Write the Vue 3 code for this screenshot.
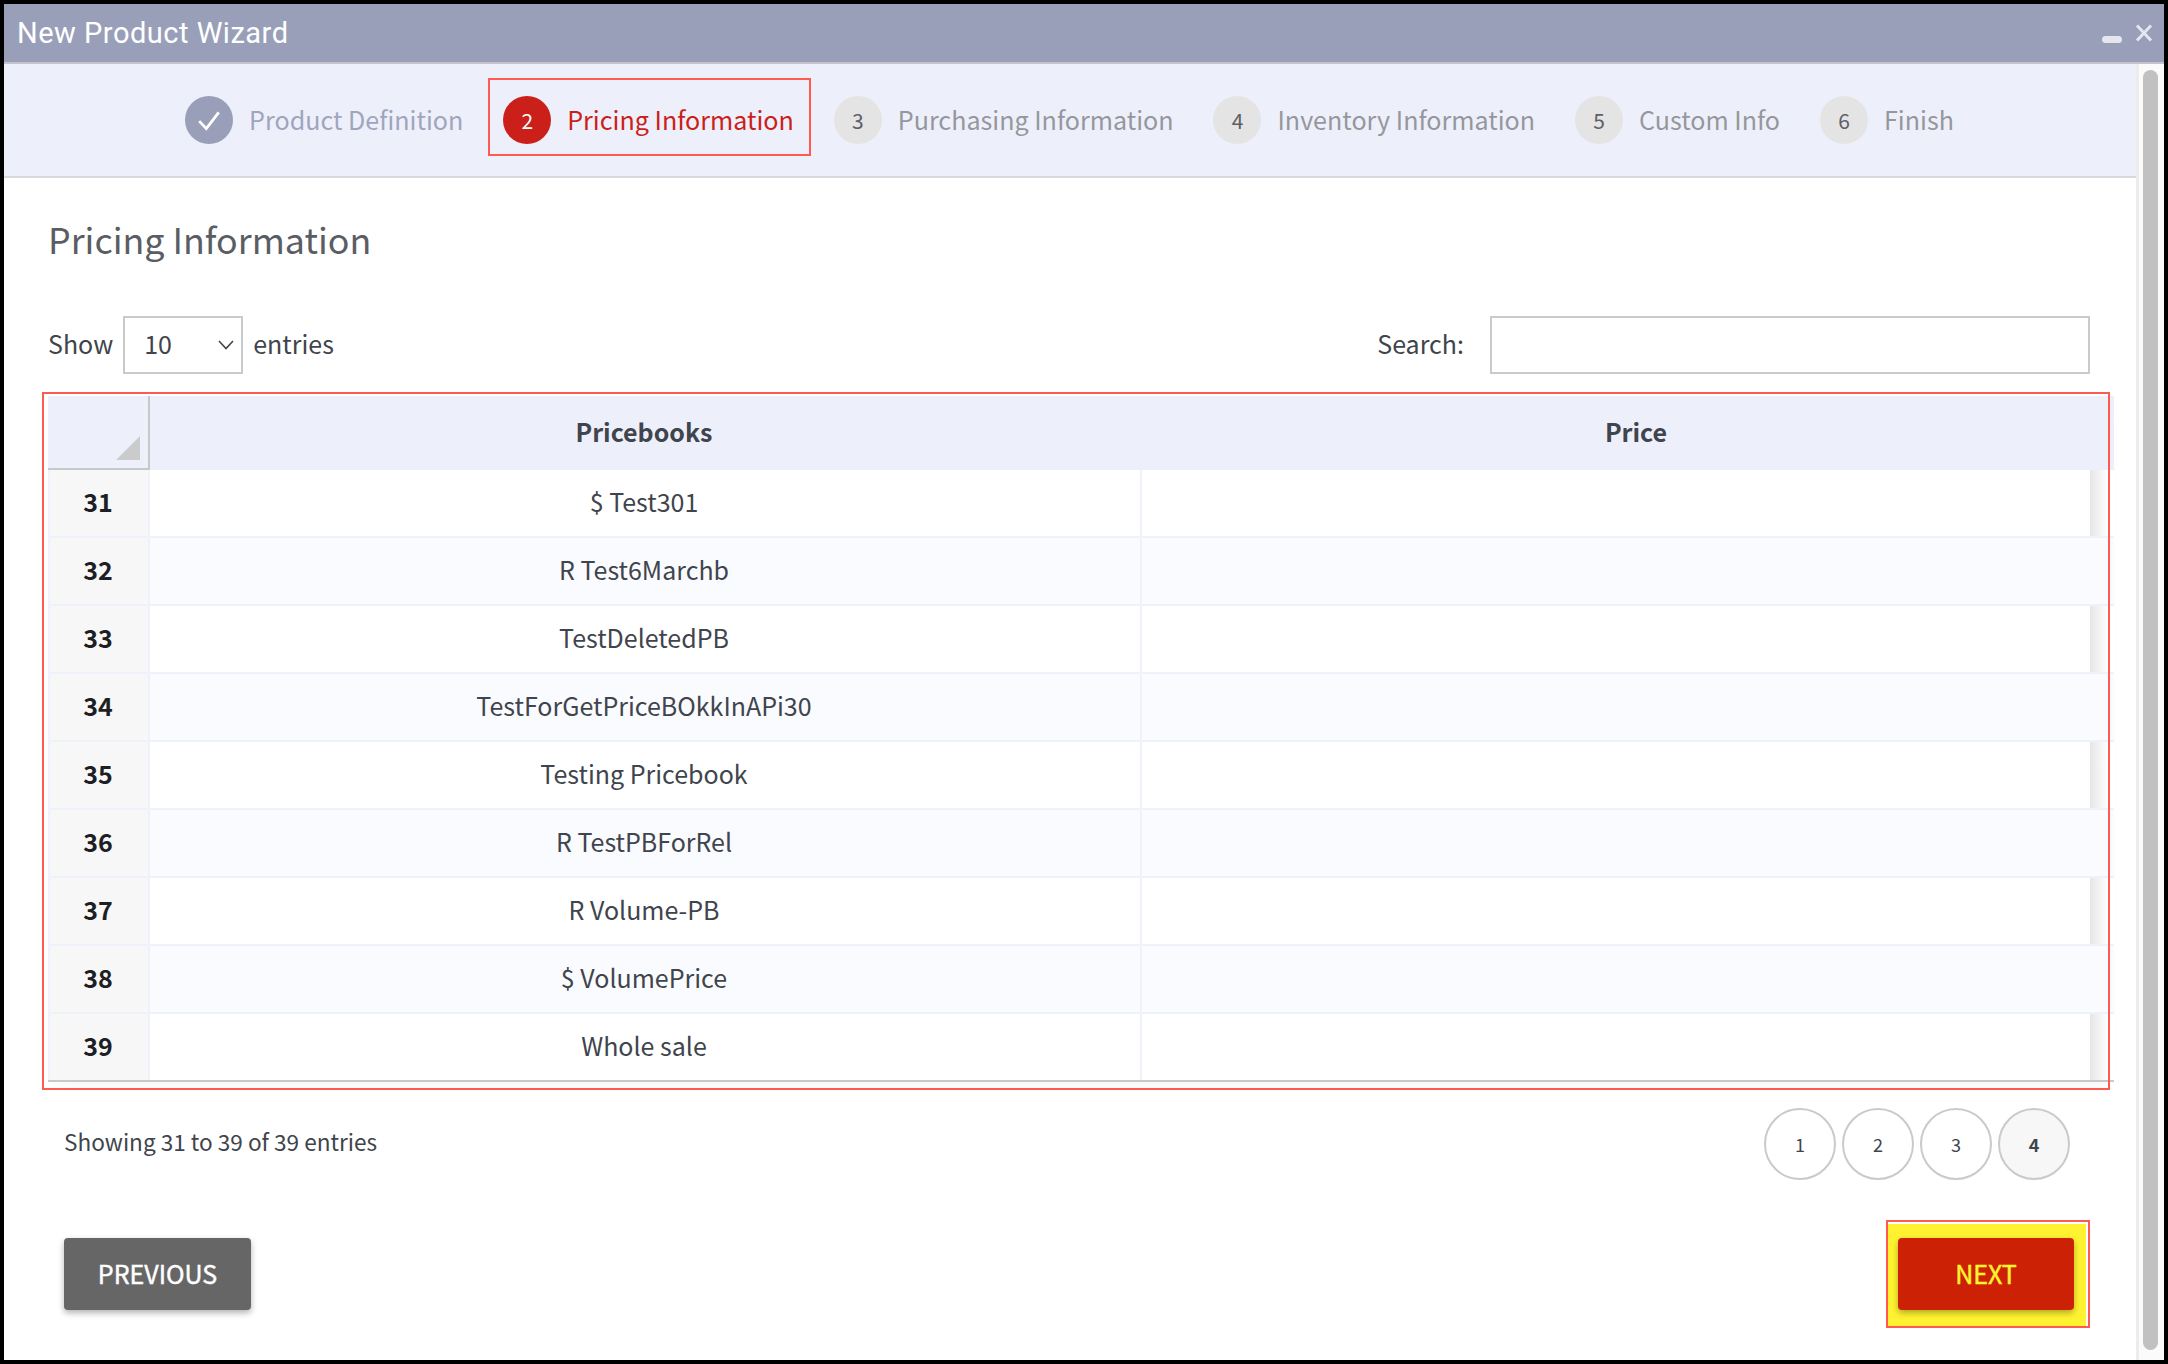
<template>
  <div class="window">
    <header class="titlebar">
      <span class="title">New Product Wizard</span>
      <div class="win-actions">
        <span class="minimize"></span>
        <svg class="close" viewBox="0 0 18 18" width="18" height="18">
          <path d="M2 1.5 L16 16.5 M16 1.5 L2 16.5" stroke="#ffffff" stroke-opacity="0.75" stroke-width="3" fill="none" />
        </svg>
      </div>
    </header>

    <div class="body">
      <main class="main">
        <nav class="steps">
          <div
            v-for="step in steps"
            :key="step.num"
            class="step"
            :class="step.state"
          >
            <span class="bubble">
              <svg v-if="step.state === 'done'" viewBox="0 0 24 24" width="26" height="26">
                <path d="M3 13 L9.5 20 L21 5" stroke="#ffffff" stroke-width="2.6" fill="none" />
              </svg>
              <template v-else>{{ step.num }}</template>
            </span>
            <span class="step-label">{{ step.label }}</span>
          </div>
        </nav>

        <section class="content">
          <h1 class="heading">Pricing Information</h1>

          <div class="toolbar">
            <div class="length">
              <span class="lift">Show</span>
              <div class="select">
                <span class="lift">10</span>
                <svg viewBox="0 0 18 12" width="18" height="12">
                  <path d="M2 2 L9 9.5 L16 2" stroke="#40444c" stroke-width="1.6" fill="none" />
                </svg>
              </div>
              <span class="lift">entries</span>
            </div>
            <div class="search">
              <span class="lift">Search:</span>
              <div class="search-input"></div>
            </div>
          </div>

          <div class="table-wrap">
            <div class="row head">
              <div class="cell corner"><span class="sort"></span></div>
              <div class="cell name">Pricebooks</div>
              <div class="cell head-price">Price</div>
            </div>
            <div
              v-for="(row, i) in rows"
              :key="row.id"
              class="row"
              :class="i % 2 ? 'even' : 'odd'"
            >
              <div class="cell num">{{ row.id }}</div>
              <div class="cell name">{{ row.name }}</div>
              <div class="cell price"></div>
            </div>
          </div>

          <div class="table-foot">
            <span class="info">Showing 31 to 39 of 39 entries</span>
            <div class="pager">
              <span
                v-for="p in 4"
                :key="p"
                class="page"
                :class="{ current: p === 4 }"
              >{{ p }}</span>
            </div>
          </div>

          <div class="actions">
            <button class="btn prev">PREVIOUS</button>
            <div class="next-mark">
              <button class="btn next">NEXT</button>
            </div>
          </div>
        </section>
      </main>

      <aside class="scrollbar"><span class="thumb"></span></aside>
    </div>
  </div>
</template>

<script setup>
const steps = [
  { num: 1, label: 'Product Definition', state: 'done' },
  { num: 2, label: 'Pricing Information', state: 'active' },
  { num: 3, label: 'Purchasing Information', state: 'todo' },
  { num: 4, label: 'Inventory Information', state: 'todo' },
  { num: 5, label: 'Custom Info', state: 'todo' },
  { num: 6, label: 'Finish', state: 'todo' }
]

const rows = [
  { id: 31, name: '$ Test301' },
  { id: 32, name: 'R Test6Marchb' },
  { id: 33, name: 'TestDeletedPB' },
  { id: 34, name: 'TestForGetPriceBOkkInAPi30' },
  { id: 35, name: 'Testing Pricebook' },
  { id: 36, name: 'R TestPBForRel' },
  { id: 37, name: 'R Volume-PB' },
  { id: 38, name: '$ VolumePrice' },
  { id: 39, name: 'Whole sale' }
]
</script>

<style>
html, body {
  margin: 0;
  background: #000;
}
</style>

<style scoped>
.window {
  width: 2168px;
  height: 1364px;
  box-sizing: border-box;
  border: 4px solid #000;
  display: flex;
  flex-direction: column;
  background: #fff;
  overflow: hidden;
  font-family: "Noto Sans CJK SC", "Noto Sans", sans-serif;
  color: #40444c;
}

.titlebar {
  height: 60px;
  flex: none;
  box-sizing: border-box;
  border-bottom: 2px solid #c4c5cc;
  background: #999fb9;
  display: flex;
  align-items: center;
  justify-content: space-between;
  padding: 0 11px 0 13px;
}

.title {
  font-family: Roboto, "Liberation Sans", sans-serif;
  font-size: 29px;
  letter-spacing: 0.5px;
  color: #fff;
}

.win-actions {
  display: flex;
  align-items: center;
  gap: 13px;
}

.minimize {
  width: 20px;
  height: 7px;
  margin-top: 12px;
  border-radius: 4px;
  background: rgba(255, 255, 255, 0.75);
}

.body {
  flex: 1;
  min-height: 0;
  display: flex;
}

.main {
  flex: 1;
  min-width: 0;
}

.scrollbar {
  width: 28px;
  flex: none;
  box-sizing: border-box;
  border-left: 3px solid #ececec;
  padding: 6px 6px 10px 4px;
  display: flex;
  background: #fbfbfb;
}

.thumb {
  width: 16px;
  border-radius: 8px;
  background: #c1c1c1;
}

.steps {
  height: 114px;
  box-sizing: border-box;
  border-bottom: 2px solid #d8d9de;
  background: #edf0fb;
  display: flex;
  align-items: center;
  justify-content: center;
  gap: 39.9px;
  padding-right: 1px;
}

.step {
  display: flex;
  align-items: center;
  gap: 16px;
  font-size: 25.1px;
  color: #96979c;
  position: relative;
}

.step-label {
  margin-top: -2px;
}

.bubble {
  width: 48px;
  height: 48px;
  border-radius: 50%;
  background: #e4e4e4;
  color: #5f6064;
  font-size: 21px;
  display: flex;
  align-items: center;
  justify-content: center;
}

.step.done .bubble {
  background: #999fb9;
}

.step.done {
  color: #a0a5bd;
}

.step.active {
  color: #cb1f1a;
}

.step.active .bubble {
  background: #cb1f1a;
  color: #fff;
}

.step.active::after {
  content: "";
  position: absolute;
  inset: -18px -17px -12px -15px;
  border: 2px solid #ff5a52;
}

.content {
  padding: 0 46px 0 44px;
}

.heading {
  margin: 0;
  padding-top: 31px;
  font-size: 35.8px;
  line-height: 58px;
  font-weight: 400;
  color: #5a5d63;
}

.toolbar {
  margin-top: 49px;
  display: flex;
  align-items: center;
  justify-content: space-between;
  font-size: 25px;
}

.lift {
  position: relative;
  top: -2px;
}

.length {
  display: flex;
  align-items: center;
  gap: 10px;
}

.select {
  width: 120px;
  height: 58px;
  box-sizing: border-box;
  border: 2px solid #cacaca;
  padding: 0 6px 0 19px;
  display: flex;
  align-items: center;
  justify-content: space-between;
}

.search {
  display: flex;
  align-items: center;
  gap: 26px;
}

.search-input {
  width: 600px;
  height: 58px;
  box-sizing: border-box;
  border: 2px solid #cacaca;
}

.table-wrap {
  position: relative;
  width: 2066px;
  margin: 22px 0 0 0;
  box-shadow: 0 8px 14px -8px rgba(0, 0, 0, 0.06);
  font-size: 25px;
}

.table-wrap::after {
  content: "";
  position: absolute;
  top: -4px;
  bottom: -8px;
  left: -6px;
  right: 4px;
  border: 2px solid #ff5a52;
  pointer-events: none;
}

.row {
  display: grid;
  grid-template-columns: 102px 992px 1fr;
  height: 68px;
  box-sizing: border-box;
  border-bottom: 2px solid #eff1fb;
}

.row:last-child {
  border-bottom: 2px solid #c8c8c8;
}

.row.even {
  background: #fafbff;
}

.row.odd .price {
  position: relative;
}

.row.odd .price::after {
  content: "";
  position: absolute;
  top: 0;
  bottom: 0;
  right: 6px;
  width: 18px;
  background: linear-gradient(to right, #e6e6e6, #ffffff);
}

.cell {
  display: flex;
  align-items: center;
  justify-content: center;
  padding-bottom: 4px;
  box-sizing: border-box;
}

.row.head {
  height: 74px;
  background: #edf0fb;
  border-bottom: 0;
  font-weight: 700;
}

.row.head .cell {
  padding-bottom: 5px;
}

.row.head .name {
  padding-right: 4px;
  border-right: 0;
}

.head-price {
  padding-left: 16px;
}

.corner {
  position: relative;
  border-right: 2px solid #c8c8c8;
  border-bottom: 2px solid #c8c8c8;
}

.sort {
  position: absolute;
  right: 8px;
  bottom: 8px;
  width: 24px;
  height: 24px;
  background: #cbcbcb;
  clip-path: polygon(100% 0, 100% 100%, 0 100%);
}

.num {
  padding-right: 2px;
  background: #f7f7f7;
  font-weight: 700;
  color: #1d1f24;
  border-right: 2px solid #eff1fb;
  border-left: 2px solid #eff1fb;
}

.name {
  padding-right: 2px;
  border-right: 2px solid #eff1fb;
}

.table-foot {
  margin-top: 26px;
  padding: 0 20px 0 16px;
  display: flex;
  align-items: center;
  justify-content: space-between;
  font-size: 22.6px;
}

.info {
  margin-top: -6px;
}

.pager {
  display: flex;
  gap: 6px;
}

.page {
  width: 72px;
  height: 72px;
  box-sizing: border-box;
  border: 2px solid #cacaca;
  border-radius: 50%;
  display: flex;
  align-items: center;
  justify-content: center;
  font-size: 18px;
}

.page.current {
  background: #f7f7f7;
  font-weight: 700;
}

.actions {
  margin-top: 40px;
  padding: 0 0 0 16px;
  display: flex;
  align-items: center;
  justify-content: space-between;
}

.btn {
  height: 72px;
  border: 0;
  border-radius: 4px;
  padding: 0 0 2px;
  font-family: inherit;
  font-size: 25px;
  font-weight: 400;
  -webkit-text-stroke: 0.45px currentColor;
  box-shadow: 0 3px 6px rgba(0, 0, 0, 0.3);
}

.prev {
  width: 187px;
  background: #666666;
  color: #fff;
}

.next-mark {
  box-sizing: border-box;
  width: 204px;
  height: 108px;
  border: 2px solid #ff5a52;
  background: linear-gradient(#fff 2px, #fff331 2px);
  padding: 16px 0 0 10px;
  box-shadow: inset -2px 0 0 #fff;
}

.next {
  display: block;
  width: 176px;
  background: #cd2106;
  color: #fff331;
}
</style>
